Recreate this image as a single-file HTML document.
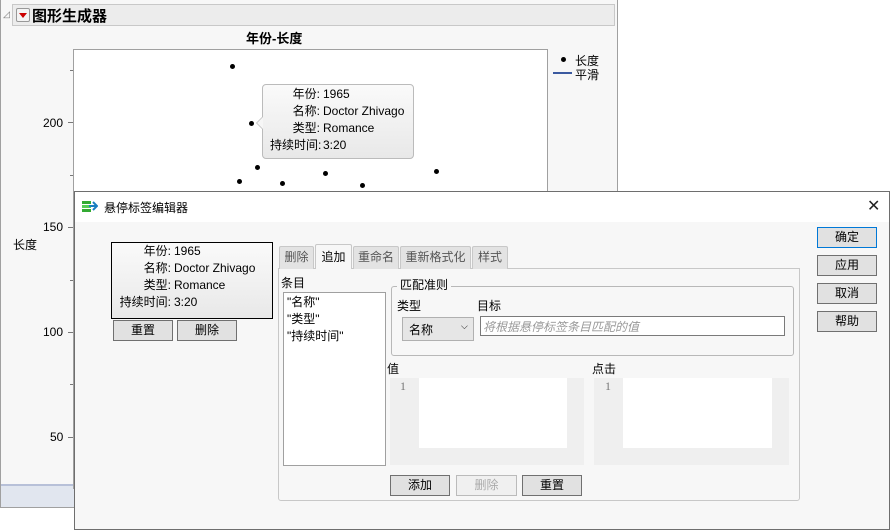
<!DOCTYPE html><html><head><meta charset="utf-8"><style>
*{margin:0;padding:0;box-sizing:border-box}
body{width:890px;height:530px;position:relative;background:#fff;font-family:"Liberation Sans","Noto Sans CJK SC",sans-serif;font-size:12px;color:#000;overflow:hidden}
.a{position:absolute;white-space:nowrap}
.dot{position:absolute;width:5px;height:5px;border-radius:50%;background:#000}
.btn{position:absolute;height:21px;border:1px solid #707070;background:#e1e1e1;text-align:center;line-height:19px;font-size:12px}
.tab{position:absolute;top:246px;height:23px;border:1px solid #c8c8c8;border-bottom:none;background:#e3e3e3;color:#555;text-align:center;line-height:21px;border-radius:2px 2px 0 0}
</style></head><body>
<div class="a" style="left:0;top:0;width:618px;height:508px;background:#f7f7f7;border:1px solid #a0a0a0;border-top:none"></div>
<div class="a" style="left:1px;top:484px;width:616px;height:23px;background:#e1e6ef;border-top:2px solid #b7c0d8"></div>
<div class="a" style="left:3px;top:9px;font-size:9px;color:#777">◿</div>
<div class="a" style="left:12px;top:4px;width:603px;height:22px;background:#ececec;border:1px solid #c8c8c8"></div>
<div class="a" style="left:16px;top:8px;width:14px;height:14px;border:1px solid #999;background:#f4f4f4;border-radius:2px"></div>
<div class="a" style="left:19px;top:13px;width:0;height:0;border-left:4px solid transparent;border-right:4px solid transparent;border-top:5px solid #c00"></div>
<div class="a" style="left:32px;top:5px;font-size:15px;font-weight:bold">图形生成器</div>
<div class="a" style="left:246px;top:28px;font-size:13px;font-weight:bold">年份-长度</div>
<div class="a" style="left:73px;top:49px;width:475px;height:440px;background:#fff;border:1px solid #a0a0a0"></div>
<div class="a" style="left:68px;top:122px;width:5px;height:1px;background:#777"></div>
<div class="a" style="left:68px;top:227px;width:5px;height:1px;background:#777"></div>
<div class="a" style="left:68px;top:332px;width:5px;height:1px;background:#777"></div>
<div class="a" style="left:68px;top:437px;width:5px;height:1px;background:#777"></div>
<div class="a" style="left:70px;top:70px;width:3px;height:1px;background:#777"></div>
<div class="a" style="left:70px;top:175px;width:3px;height:1px;background:#777"></div>
<div class="a" style="left:70px;top:280px;width:3px;height:1px;background:#777"></div>
<div class="a" style="left:70px;top:384px;width:3px;height:1px;background:#777"></div>
<div class="a" style="left:43px;top:116px">200</div>
<div class="a" style="left:43px;top:220px">150</div>
<div class="a" style="left:43px;top:325px">100</div>
<div class="a" style="left:50px;top:430px">50</div>
<div class="a" style="left:13px;top:236px">长度</div>
<div class="dot" style="left:230px;top:64px"></div>
<div class="dot" style="left:249px;top:121px"></div>
<div class="dot" style="left:255px;top:165px"></div>
<div class="dot" style="left:237px;top:179px"></div>
<div class="dot" style="left:280px;top:181px"></div>
<div class="dot" style="left:323px;top:171px"></div>
<div class="dot" style="left:360px;top:183px"></div>
<div class="dot" style="left:434px;top:169px"></div>
<div class="dot" style="left:561px;top:57px"></div>
<div class="a" style="left:575px;top:52px">长度</div>
<div class="a" style="left:553px;top:72px;width:19px;height:2px;background:#3b5aa0"></div>
<div class="a" style="left:575px;top:66px">平滑</div>
<div class="a" style="left:262px;top:84px;width:152px;height:75px;border:1px solid #bbb;border-radius:4px;background:linear-gradient(#fafafa,#e8e8e8)"></div>
<div class="a" style="left:256px;top:116px;width:0;height:0;border-top:7px solid transparent;border-bottom:7px solid transparent;border-right:7px solid #bbb"></div>
<div class="a" style="left:257px;top:117px;width:0;height:0;border-top:6px solid transparent;border-bottom:6px solid transparent;border-right:6px solid #f6f6f6"></div>
<div class="a" style="left:270px;top:86px;line-height:17px;text-align:right;width:50px">年份:<br>名称:<br>类型:<br>持续时间:</div>
<div class="a" style="left:323px;top:86px;line-height:17px">1965<br>Doctor Zhivago<br>Romance<br>3:20</div>
<div class="a" style="left:74px;top:191px;width:816px;height:339px;background:#f7f7f7;border:1px solid #6e6e6e"></div>
<div class="a" style="left:75px;top:192px;width:814px;height:30px;background:#fff"></div>
<svg class="a" style="left:82px;top:199px" width="16" height="14"><rect x="0" y="2" width="9" height="3" fill="#3a3"/><rect x="0" y="6" width="9" height="3" fill="#5c5"/><rect x="0" y="10" width="9" height="3" fill="#3a3"/><path d="M7 7 L15 7 M11 3 L15 7 L11 11" stroke="#1a7fc0" stroke-width="2" fill="none"/></svg>
<div class="a" style="left:104px;top:199px">悬停标签编辑器</div>
<div class="a" style="left:867px;top:196px;font-size:16px;color:#222">✕</div>
<div class="a" style="left:111px;top:242px;width:162px;height:77px;border:1px solid #000;background:linear-gradient(#fafafa,#e8e8e8)"></div>
<div class="a" style="left:119px;top:243px;line-height:17px;text-align:right;width:52px">年份:<br>名称:<br>类型:<br>持续时间:</div>
<div class="a" style="left:174px;top:243px;line-height:17px">1965<br>Doctor Zhivago<br>Romance<br>3:20</div>
<div class="btn" style="left:113px;top:320px;width:60px">重置</div>
<div class="btn" style="left:177px;top:320px;width:60px">删除</div>
<div class="a" style="left:278px;top:268px;width:522px;height:233px;border:1px solid #c8c8c8;border-radius:0 0 3px 3px;background:#f7f7f7"></div>
<div class="tab" style="left:279px;width:35px">删除</div>
<div class="tab" style="left:315px;top:244px;height:25px;width:37px;background:#f7f7f7;color:#000;line-height:25px">追加</div>
<div class="tab" style="left:353px;width:46px">重命名</div>
<div class="tab" style="left:400px;width:71px">重新格式化</div>
<div class="tab" style="left:472px;width:36px">样式</div>
<div class="a" style="left:281px;top:274px">条目</div>
<div class="a" style="left:283px;top:292px;width:103px;height:174px;background:#fff;border:1px solid #a0a0a0"></div>
<div class="a" style="left:287px;top:294px;line-height:17px">"名称"<br>"类型"<br>"持续时间"</div>
<div class="a" style="left:391px;top:286px;width:403px;height:70px;border:1px solid #b8b8b8;border-radius:3px"></div>
<div class="a" style="left:397px;top:276px;background:#f7f7f7;padding:0 3px">匹配准则</div>
<div class="a" style="left:397px;top:297px">类型</div>
<div class="a" style="left:477px;top:297px">目标</div>
<div class="a" style="left:402px;top:317px;width:72px;height:24px;border:1px solid #b0b0b0;background:#e6e6e6;padding:3px 0 0 6px">名称<span style="position:absolute;left:58px;top:3px;font-size:9px">⌵</span></div>
<div class="a" style="left:480px;top:316px;width:305px;height:20px;border:1px solid #7a7a7a;background:#fff;color:#999;font-style:italic;padding:1px 2px">将根据悬停标签条目匹配的值</div>
<div class="a" style="left:387px;top:360px">值</div>
<div class="a" style="left:592px;top:360px">点击</div>
<div class="a" style="left:390px;top:378px;width:194px;height:87px;background:#efefef"></div>
<div class="a" style="left:419px;top:378px;width:148px;height:70px;background:#fff"></div>
<div class="a" style="left:400px;top:379px;color:#777;font-family:'Liberation Serif',serif">1</div>
<div class="a" style="left:594px;top:378px;width:195px;height:87px;background:#efefef"></div>
<div class="a" style="left:623px;top:378px;width:149px;height:70px;background:#fff"></div>
<div class="a" style="left:605px;top:379px;color:#777;font-family:'Liberation Serif',serif">1</div>
<div class="btn" style="left:390px;top:475px;width:60px">添加</div>
<div class="btn" style="left:456px;top:475px;width:61px;border-color:#bbb;color:#aaa;background:#f0f0f0">删除</div>
<div class="btn" style="left:522px;top:475px;width:60px">重置</div>
<div class="btn" style="left:817px;top:227px;width:60px;border-color:#0078d7">确定</div>
<div class="btn" style="left:817px;top:255px;width:60px">应用</div>
<div class="btn" style="left:817px;top:283px;width:60px">取消</div>
<div class="btn" style="left:817px;top:311px;width:60px">帮助</div>
</body></html>
